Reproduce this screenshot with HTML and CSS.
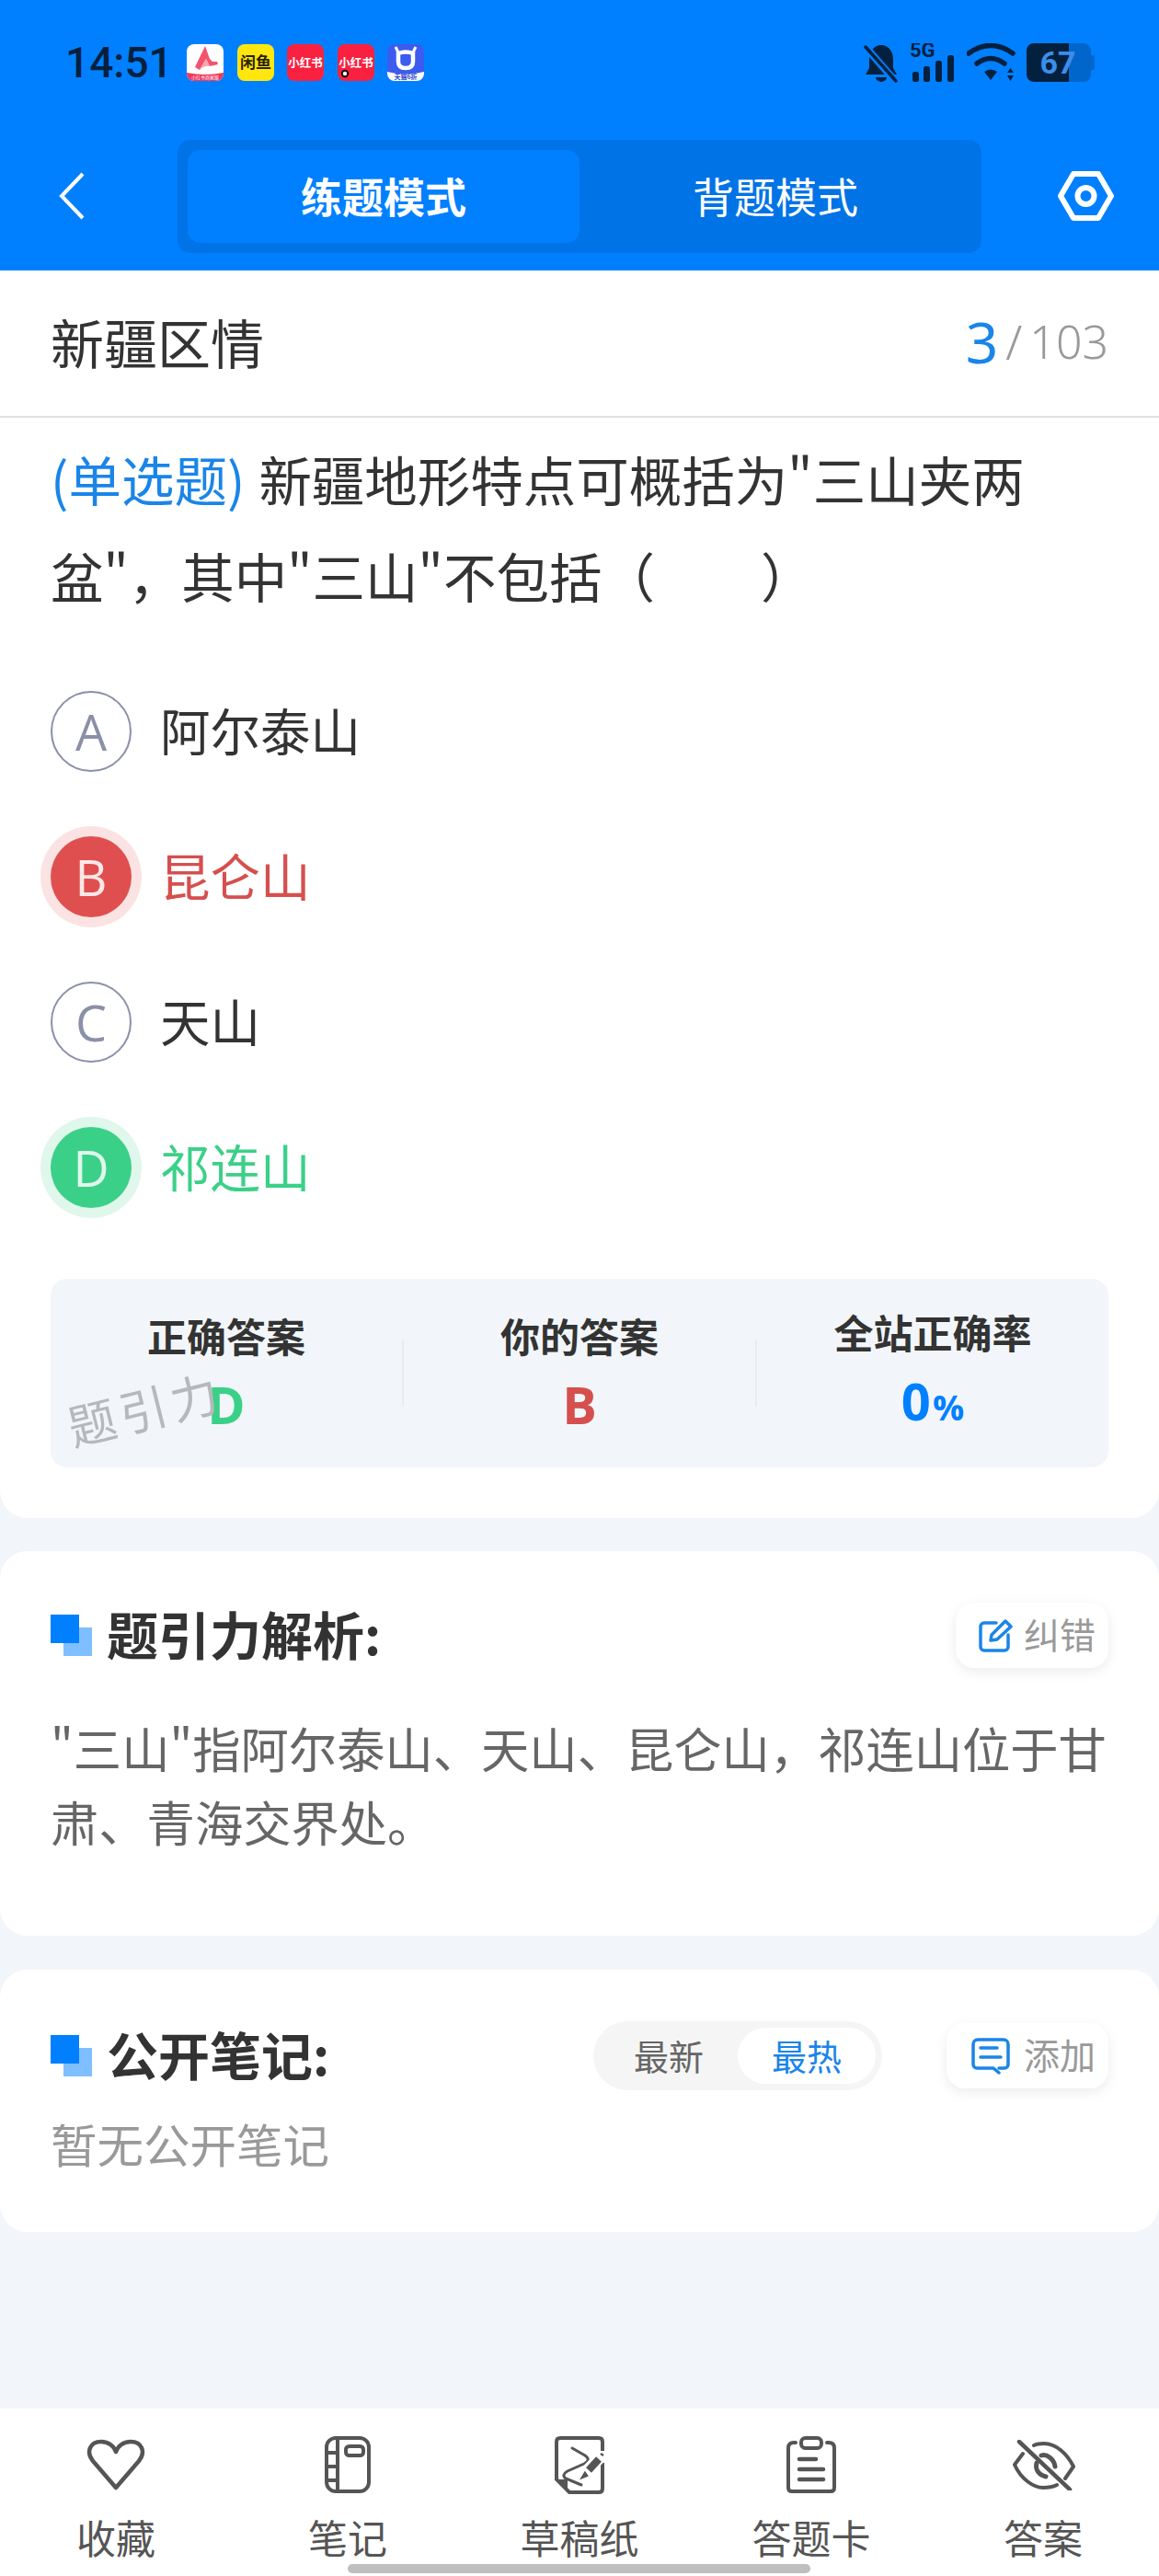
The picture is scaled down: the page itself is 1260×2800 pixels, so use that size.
FILE: index.html
```html
<!DOCTYPE html>
<html lang="zh-CN">
<head>
    <meta charset="UTF-8">
    <meta name="viewport" content="width=device-width, initial-scale=1.0">
    <title>新疆区情 - 题引力</title>
    <link rel="stylesheet" href="styles.css">
</head>
<body>
    <header class="top">
        <div class="status-bar">
            <span class="time">14:51</span>
            <div class="app-icons">
                <svg class="app-icon" viewBox="0 0 40 40">
                    <rect width="40" height="40" rx="8" fill="#fff"/>
                    <path d="M0 31q20 4 40 0v1a8 8 0 0 1-8 8H8a8 8 0 0 1-8-8z" fill="#f0385a"/>
                    <path d="M20 2L9 25l5 3 7-12 4 8 9-2-1-3-5 0-3-3z" fill="#f4536c"/>
                    <path d="M14 28l7-12 4 8q-6-1-11 4z" fill="#f9a3ae"/>
                    <text x="20" y="38" class="tiny" text-anchor="middle">小红书商家版</text>
                </svg>
                <svg class="app-icon" viewBox="0 0 40 40">
                    <rect width="40" height="40" rx="8" fill="#ffe60f"/>
                    <text x="20" y="26" class="xianyu" text-anchor="middle">闲鱼</text>
                </svg>
                <svg class="app-icon" viewBox="0 0 40 40">
                    <rect width="40" height="40" rx="8" fill="#f9213f"/>
                    <text x="20" y="25" class="xhs" text-anchor="middle">小红书</text>
                </svg>
                <svg class="app-icon" viewBox="0 0 40 40">
                    <rect width="40" height="40" rx="8" fill="#f9213f"/>
                    <text x="20" y="25" class="xhs" text-anchor="middle">小红书</text>
                    <circle cx="8" cy="32" r="3.2" fill="#fff" stroke="#111" stroke-width="2"/>
                </svg>
                <svg class="app-icon" viewBox="0 0 40 40">
                    <rect width="40" height="40" rx="8" fill="#3c5bf0"/>
                    <path d="M0 30q20 5 40 0v2a8 8 0 0 1-8 8H8a8 8 0 0 1-8-8z" fill="#fff"/>
                    <path d="M12 10q8-3 16 0v9q0 7-8 7t-8-7z" fill="none" stroke="#fff" stroke-width="4.5"/>
                    <path d="M9 3l3 6M31 3l-3 6" stroke="#fff" stroke-width="3"/>
                    <text x="20" y="38" class="tmall" text-anchor="middle">天猫6折</text>
                </svg>
            </div>
            <div class="sys-icons">
                <svg width="38" height="43" viewBox="0 0 38 43">
                    <path d="M19 2c8 0 13 7 13 15v10l4 7H2l4-7V17C6 9 11 2 19 2z" fill="#04203f"/>
                    <path d="M13 37h12a6 5 0 0 1-12 0z" fill="#04203f"/>
                    <path d="M1 3l34 39" stroke="#0080ff" stroke-width="8"/>
                    <path d="M2 4l33 37" stroke="#04203f" stroke-width="3.5" stroke-linecap="round"/>
                </svg>
                <svg width="50" height="42" viewBox="0 0 50 42">
                    <text x="0" y="15" class="five-g">5G</text>
                    <rect x="3" y="31" width="7" height="11" rx="2.5" fill="#04203f"/>
                    <rect x="15" y="25" width="7" height="17" rx="2.5" fill="#04203f"/>
                    <rect x="28" y="19" width="7" height="23" rx="2.5" fill="#04203f"/>
                    <rect x="41" y="13" width="7" height="29" rx="2.5" fill="#04203f"/>
                </svg>
                <svg width="53" height="42" viewBox="0 0 53 42">
                    <path d="M2 11q24-17 48 0M11 22q15-11 30 0" fill="none" stroke="#04203f" stroke-width="5.5" stroke-linecap="round"/>
                    <path d="M19 31q7-5 14 0l-7 9z" fill="#04203f"/>
                    <path d="M44 32l3.500-5 3.500 5zM44 35h7l-3.500 6z" fill="#04203f"/>
                </svg>
                <svg width="74" height="42" viewBox="0 0 74 42">
                    <rect x="34" width="36" height="42" rx="8" fill="#0066cc"/>
                    <rect x="69" y="13" width="5" height="16" rx="2.500" fill="#0066cc"/>
                    <path d="M8 0h38v42H8a8 8 0 0 1-8-8V8a8 8 0 0 1 8-8z" fill="#04203f"/>
                    <text x="34" y="33" class="battery-level" text-anchor="middle">67</text>
                </svg>
            </div>
        </div>
        <nav class="nav">
            <svg class="back" width="28" height="52" viewBox="0 0 28 52">
                <path d="M26 2L3 26l23 24" fill="none" stroke="#fff" stroke-width="4"/>
            </svg>
            <div class="mode-switch">
                <div class="mode mode-on">练题模式</div>
                <div class="mode">背题模式</div>
            </div>
            <svg class="settings" width="61" height="54" viewBox="0 0 61 54">
                <path d="M17 3h27l14 24-14 24H17L3 27z" fill="none" stroke="#fff" stroke-width="6" stroke-linejoin="round"/>
                <circle cx="30.500" cy="27" r="9" fill="none" stroke="#fff" stroke-width="6"/>
            </svg>
        </nav>
    </header>

    <section class="card card-question">
        <div class="sub-head">
            <div class="chapter">新疆区情</div>
            <div class="counter"><span class="counter-now">3</span><span class="counter-slash">/</span><span class="counter-total">103</span></div>
        </div>
        <div class="question"><span class="q-type">(单选题)</span>新疆地形特点可概括为"三山夹两<br>盆"，其中"三山"不包括（　　）</div>
        <div class="options">
            <div class="option"><span class="letter">A</span><span class="option-text">阿尔泰山</span></div>
            <div class="option wrong"><span class="letter">B</span><span class="option-text">昆仑山</span></div>
            <div class="option"><span class="letter">C</span><span class="option-text">天山</span></div>
            <div class="option right"><span class="letter">D</span><span class="option-text">祁连山</span></div>
        </div>
        <div class="stats">
            <div class="stat">
                <div class="stat-label">正确答案</div>
                <div class="stat-value green">D</div>
            </div>
            <div class="stat-sep"></div>
            <div class="stat">
                <div class="stat-label">你的答案</div>
                <div class="stat-value red">B</div>
            </div>
            <div class="stat-sep"></div>
            <div class="stat">
                <div class="stat-label">全站正确率</div>
                <div class="stat-value blue">0<small>%</small></div>
            </div>
            <div class="watermark">题引力</div>
        </div>
    </section>

    <section class="card card-analysis">
        <div class="card-head">
            <svg class="squares" width="45" height="45" viewBox="0 0 45 45">
                <rect x="14" y="14" width="31" height="31" fill="#80bfff"/>
                <rect width="31" height="31" fill="#0080ff"/>
            </svg>
            <h2>题引力解析:</h2>
            <div class="pill-btn pill-fix">
                <svg width="38" height="38" viewBox="0 0 38 38">
                    <path d="M20 5H7a4 4 0 0 0-4 4v22a4 4 0 0 0 4 4h22a4 4 0 0 0 4-4V18" fill="none" stroke="#1a85e8" stroke-width="3.500" stroke-linecap="round"/>
                    <path d="M14 24l1-6L30 3l6 6-15 14z" fill="none" stroke="#1a85e8" stroke-width="3.500" stroke-linejoin="round"/>
                </svg>
                <span>纠错</span>
            </div>
        </div>
        <p class="analysis">"三山"指阿尔泰山、天山、昆仑山，祁连山位于甘<br>肃、青海交界处。</p>
    </section>

    <section class="card card-notes">
        <div class="card-head card-head-notes">
            <svg class="squares" width="45" height="45" viewBox="0 0 45 45">
                <rect x="14" y="14" width="31" height="31" fill="#80bfff"/>
                <rect width="31" height="31" fill="#0080ff"/>
            </svg>
            <h2>公开笔记:</h2>
            <div class="sort-tabs">
                <div class="sort-tab">最新</div>
                <div class="sort-tab sort-on">最热</div>
            </div>
            <div class="pill-btn pill-add">
                <svg width="42" height="40" viewBox="0 0 42 40">
                    <path d="M24 33H6a4 4 0 0 1-4-4V7a5 5 0 0 1 5-5h28a5 5 0 0 1 5 5v22a4 4 0 0 1-4 4h-6M24 33l6 5" fill="none" stroke="#1a85e8" stroke-width="3.500" stroke-linecap="round" stroke-linejoin="round"/>
                    <path d="M10 11h18M10 21h22" stroke="#1a85e8" stroke-width="3.500" stroke-linecap="round"/>
                </svg>
                <span>添加</span>
            </div>
        </div>
        <p class="no-notes">暂无公开笔记</p>
    </section>

    <footer class="tabbar">
        <div class="tab">
            <div class="tab-icon">
                <svg width="64" height="56" viewBox="0 0 64 56">
                    <path d="M32 53L7 24C-1 14 4 3 16 3c8 0 14 5 16 11 2-6 8-11 16-11 12 0 17 11 9 21z" fill="none" stroke="#555" stroke-width="4.500" stroke-linejoin="round"/>
                </svg>
            </div>
            <span>收藏</span>
        </div>
        <div class="tab">
            <div class="tab-icon">
                <svg width="50" height="62" viewBox="0 0 50 62">
                    <rect x="2" y="2" width="46" height="58" rx="10" fill="none" stroke="#555" stroke-width="4"/>
                    <path d="M14 2v58M2 18h12M2 33h12M2 48h12" fill="none" stroke="#555" stroke-width="4"/>
                    <rect x="23" y="11" width="19" height="10" rx="3.500" fill="none" stroke="#555" stroke-width="4"/>
                </svg>
            </div>
            <span>笔记</span>
        </div>
        <div class="tab">
            <div class="tab-icon">
                <svg width="54" height="63" viewBox="0 0 54 63">
                    <path d="M52 16V6q0-4-4-4H6Q2 2 2 6v41l14 14h32q4 0 4-4V29" fill="none" stroke="#555" stroke-width="4"/>
                    <path d="M2 47h12v13z" fill="#555"/>
                    <path d="M19 13l14 8q7 5-1 9L14 38q-7 4-2 8l17 7" fill="none" stroke="#555" stroke-width="3" stroke-linecap="round"/>
                    <path d="M53 19L33 40" stroke="#fff" stroke-width="13"/>
                    <path d="M48 25L37 37" stroke="#555" stroke-width="8"/>
                    <path d="M33 40l-3 5 5-2zM50 19l3 2" fill="#555" stroke="#555" stroke-width="2.500"/>
                </svg>
            </div>
            <span>草稿纸</span>
        </div>
        <div class="tab">
            <div class="tab-icon">
                <svg width="54" height="62" viewBox="0 0 54 62">
                    <path d="M10 7H8Q2 7 2 13v43q0 4 4 4h42q4 0 4-4V13q0-6-6-6h-2" fill="none" stroke="#555" stroke-width="4" stroke-linecap="round"/>
                    <rect x="16" y="2" width="22" height="11" rx="4.500" fill="none" stroke="#555" stroke-width="4"/>
                    <path d="M14 25h18M14 36h26M14 47h26" stroke="#555" stroke-width="4.500" stroke-linecap="round"/>
                </svg>
            </div>
            <span>答题卡</span>
        </div>
        <div class="tab">
            <div class="tab-icon">
                <svg width="69" height="55" viewBox="0 0 69 55">
                    <path d="M8 2l55 52" stroke="#555" stroke-width="4.500" stroke-linecap="round"/>
                    <path d="M12 15L3 27c7 16 21 25 31 25 6 0 11-1 15-3M24 6c4-2 7-2 11-2 13 0 25 11 32 25l-9 13" fill="none" stroke="#555" stroke-width="4" stroke-linecap="round" stroke-linejoin="round"/>
                    <path d="M27 25c-2 7 2 13 10 15M32 17c6-2 14 4 15 12" fill="none" stroke="#555" stroke-width="5" stroke-linecap="round"/>
                </svg>
            </div>
            <span>答案</span>
        </div>
        <div class="home-bar"></div>
    </footer>
</body>
</html>
```

FILE: styles.css
```css
* {
    box-sizing: border-box;
}
body {
    margin: 0;
    width: 1260px;
    height: 2800px;
    overflow: hidden;
    display: flex;
    flex-direction: column;
    background: #f2f6fa;
    color: #333;
    font-family: "Noto Sans CJK SC", "Noto Sans", sans-serif;
}

/* top blue area */
.top {
    height: 294px;
    background: #0080ff;
}
.status-bar {
    display: flex;
    align-items: center;
    height: 42px;
    margin-top: 47px;
    padding: 0 70px 0 71px;
}
.time {
    width: 132px;
    font-family: Roboto, sans-serif;
    font-size: 46px;
    font-weight: 500;
    color: #04203f;
}
.app-icons {
    display: flex;
    gap: 14.600px;
}
.app-icon {
    width: 40px;
    height: 40px;
}
.sys-icons {
    display: flex;
    margin-left: auto;
    gap: 12px;
}
.tiny {
    font-size: 5px;
    fill: #fff;
}
.xianyu {
    font-size: 17px;
    font-weight: 700;
    fill: #2b2200;
}
.xhs {
    font-size: 12.500px;
    font-weight: 700;
    fill: #fff;
}
.tmall {
    font-size: 7px;
    font-weight: 700;
    fill: #2b46c8;
}
.five-g {
    font-family: Roboto, sans-serif;
    font-size: 22px;
    font-weight: 700;
    fill: #04203f;
}
.battery-level {
    font-family: Roboto, sans-serif;
    font-size: 34px;
    font-weight: 700;
    fill: #3c8ee8;
}
.nav {
    display: flex;
    align-items: center;
    margin-top: 63px;
    padding-left: 64px;
}
.back {
    margin-right: 101px;
    margin-bottom: 2px;
}
.mode-switch {
    display: flex;
    width: 874px;
    height: 123px;
    padding: 11px;
    background: #0073e6;
    border-radius: 14px;
}
.mode {
    flex: 1;
    display: flex;
    align-items: center;
    justify-content: center;
    padding-bottom: 3px;
    border-radius: 14px;
    font-size: 45px;
    color: #fff;
}
.mode-on {
    background: #0080ff;
    font-weight: 700;
}
.settings {
    margin-left: 83px;
    margin-bottom: 2px;
}

/* cards */
.card {
    background: #fff;
    border-radius: 30px;
}
.card-question {
    padding-bottom: 55px;
    border-radius: 0 0 30px 30px;
}
.sub-head {
    display: flex;
    align-items: center;
    justify-content: space-between;
    height: 160px;
    padding: 0 55px 4px;
    border-bottom: 2px solid #e0e0e0;
}
.chapter {
    font-size: 58px;
}
.counter {
    display: flex;
    align-items: center;
    font-family: "Noto Sans", sans-serif;
    font-weight: 300;
    line-height: 70px;
    color: #999;
}
.counter-now {
    font-size: 62px;
    font-weight: 400;
    color: #1a85e8;
}
.counter-slash {
    margin: 0 8px;
    font-size: 52px;
}
.counter-total {
    font-size: 50px;
}
.question {
    height: 227px;
    padding: 14px 55px 0;
    font-size: 57.500px;
    line-height: 105px;
}
.q-type {
    margin-right: 15px;
    color: #1a85e8;
}
.options {
    margin-top: 35px;
    padding: 0 55px;
}
.option {
    display: flex;
    align-items: center;
    gap: 31px;
    height: 158px;
    font-size: 54.500px;
}
.option-text {
    margin-bottom: 6px;
}
.letter {
    display: flex;
    align-items: center;
    justify-content: center;
    width: 88px;
    height: 88px;
    border: 2.500px solid #8a90a8;
    border-radius: 50%;
    font-family: "Open Sans", sans-serif;
    font-size: 54px;
    font-weight: 400;
    color: #8a90a8;
}
.wrong {
    color: #d64f4f;
}
.wrong .letter {
    background: #e04f4f;
    border: 0;
    color: #fde8e8;
    box-shadow: 0 0 0 11px #fbe3e3;
}
.right {
    color: #3bd088;
}
.right .letter {
    background: #3bd088;
    border: 0;
    color: #e0f7ec;
    box-shadow: 0 0 0 11px #e0f7ec;
}
.stats {
    position: relative;
    display: flex;
    align-items: center;
    height: 205px;
    margin: 42px 55px 0;
    background: #f2f6fa;
    border-radius: 18px;
}
.stat {
    flex: 1;
    padding-bottom: 3px;
    text-align: center;
}
.stat-sep {
    width: 2px;
    height: 73px;
    background: #e8ebf0;
}
.stat-label {
    font-size: 43px;
    font-weight: 700;
    line-height: 48px;
}
.stat-value {
    margin-top: 21px;
    font-family: "Open Sans", sans-serif;
    font-size: 56px;
    font-weight: 700;
    line-height: 60px;
}
.stat-value small {
    margin-left: 2px;
    font-size: 38px;
}
.green {
    color: #3bd088;
}
.red {
    color: #d64f4f;
}
.blue {
    color: #0080ff;
}
.watermark {
    position: absolute;
    left: 17px;
    top: 110px;
    font-size: 52px;
    letter-spacing: 5px;
    line-height: 60px;
    color: #b5b9bc;
    transform: rotate(-14deg);
}
.card-analysis {
    margin-top: 36px;
    padding: 56px 55px 0;
    height: 418px;
}
.card-notes {
    margin-top: 37px;
    padding: 56px 55px 0;
    height: 285px;
}
.card-head {
    display: flex;
    align-items: center;
    height: 71px;
}
.card-head-notes {
    height: 75px;
}
.squares {
    margin-right: 16px;
}
.card-head h2 {
    margin: 0 0 6px;
    font-size: 56px;
    font-weight: 700;
}
.pill-btn {
    display: flex;
    align-items: center;
    height: 71px;
    background: #fff;
    border-radius: 20px;
    box-shadow: 0 4px 14px rgba(0,0,0,0.08);
    font-size: 39px;
    color: #999;
}
.pill-btn span {
    margin-bottom: 5px;
}
.pill-fix {
    gap: 12px;
    width: 166px;
    margin-left: auto;
    padding-left: 24px;
}
.pill-add {
    gap: 15px;
    width: 176px;
    margin-left: 70px;
    padding-left: 27px;
}
.sort-tabs {
    display: flex;
    align-items: center;
    width: 314px;
    height: 75px;
    margin-left: auto;
    padding: 7px;
    background: #f5f5f5;
    border-radius: 38px;
}
.sort-tab {
    flex: 1;
    display: flex;
    align-items: center;
    justify-content: center;
    height: 61px;
    padding-bottom: 3px;
    border-radius: 31px;
    font-size: 38px;
    color: #666;
}
.sort-on {
    background: #fff;
    color: #1a85e8;
}
.analysis {
    margin: 46px 0 0;
    font-size: 52.300px;
    line-height: 80px;
    white-space: nowrap;
    color: #666;
}
.no-notes {
    margin: 27px 0 0;
    font-size: 50.500px;
    line-height: 60px;
    color: #999;
}

/* bottom bar */
.tabbar {
    position: relative;
    display: flex;
    height: 182px;
    margin-top: auto;
    background: #fff;
}
.tab {
    flex: 1;
    padding-top: 29px;
    text-align: center;
    font-size: 43px;
    line-height: 50px;
    color: #555;
}
.tab-icon {
    display: flex;
    align-items: center;
    justify-content: center;
    height: 64px;
    margin-bottom: 21px;
}
.home-bar {
    position: absolute;
    left: 378px;
    top: 169px;
    width: 503px;
    height: 10px;
    background: #bfbfbf;
    border-radius: 5px;
}
```
